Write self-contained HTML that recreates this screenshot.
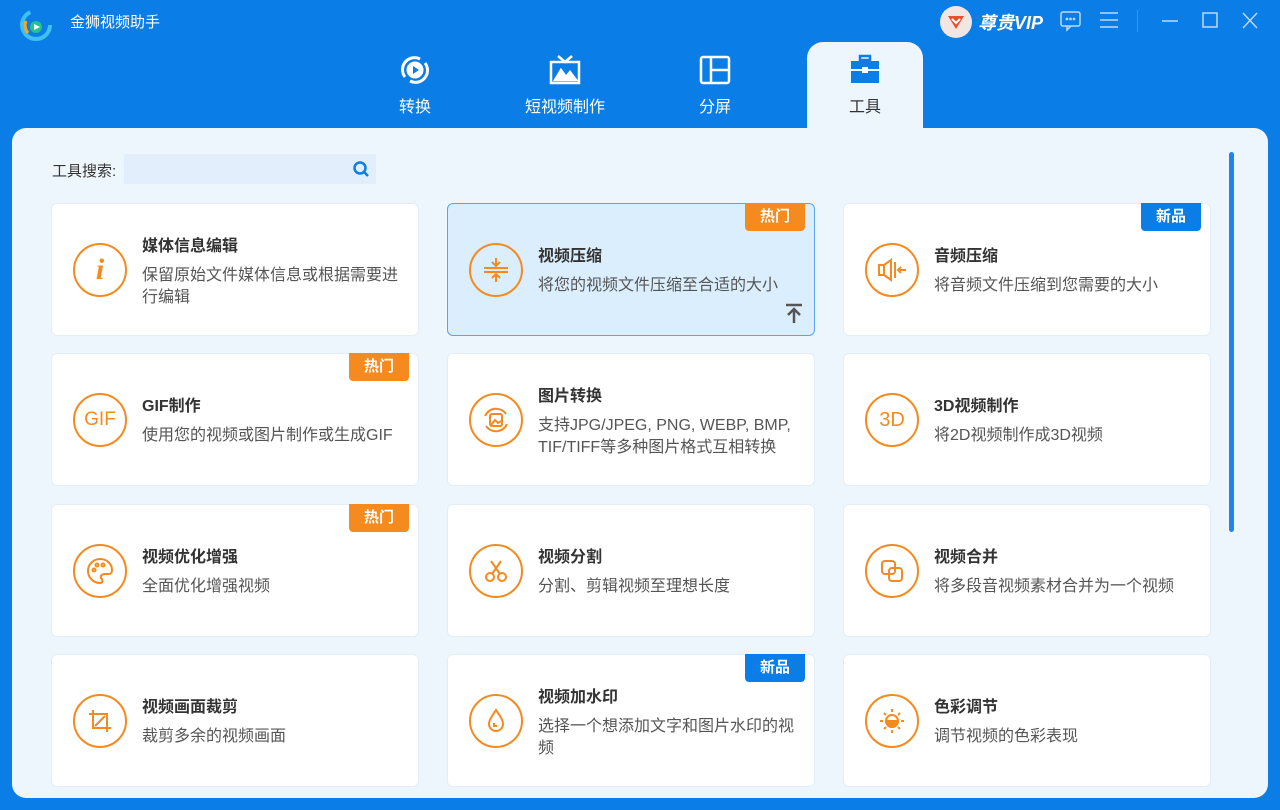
<!DOCTYPE html>
<html><head><meta charset="utf-8"><style>
*{box-sizing:border-box;margin:0;padding:0}
body{width:1280px;height:810px;background:#0b7de6;font-family:"Liberation Sans","Noto Sans CJK SC",sans-serif;position:relative;overflow:hidden}
.abs{position:absolute}
.title{left:70px;top:11px;color:#fff;font-size:15px}
.tab{position:absolute;top:53px;width:120px;text-align:center;color:#fff;font-size:16px}
.tab svg{display:block;margin:0 auto 6px}
.active{left:807px;top:42px;width:116px;height:90px;background:#eef6fd;border-radius:16px 16px 0 0}
.panel{left:12px;top:128px;width:1256px;height:670px;background:#eef6fd;border-radius:14px}
.card{position:absolute;width:368px;height:133px;background:#fff;border:1px solid #e3eef8;border-radius:6px}
.card.sel{background:#dbeefd;border-color:#5aa4ea}
.ic{position:absolute;left:21px;top:39px;width:54px;height:54px;border:2px solid #f58a1f;border-radius:50%;display:flex;align-items:center;justify-content:center;color:#f58a1f}
.ct{position:absolute;left:90px;font-size:16px;font-weight:bold;color:#333}
.cd{position:absolute;left:90px;width:258px;font-size:16px;color:#555;line-height:22px}
.badge{position:absolute;right:9px;top:-1px;width:60px;height:28px;border-radius:0 0 4px 4px;color:#fff;font-size:15px;font-weight:bold;text-align:center;line-height:27px}
.hot{background:#f58a1f}.new{background:#0b7de6}
</style></head><body>
<svg class="abs" style="left:20px;top:9px" width="32" height="32" viewBox="0 0 32 32"><circle cx="16" cy="16" r="14" fill="none" stroke="#3fc0f0" stroke-width="4" stroke-dasharray="60 30"/><path d="M8 24 A12 12 0 0 1 6 12" stroke="#f5a623" stroke-width="3" fill="none"/><circle cx="16" cy="18" r="6" fill="#22c38e"/><path d="M14 15 L20 18 L14 21Z" fill="#fff"/></svg>
<div class="abs title">金狮视频助手</div>
<div class="abs" style="left:940px;top:6px;width:32px;height:32px;border-radius:50%;background:#f1e6e1"></div>
<svg class="abs" style="left:946px;top:13px" width="20" height="18" viewBox="0 0 20 18"><path d="M2 3 H18 L10 16Z" fill="#e8502e"/><path d="M6 6 L10 10 L14 6" stroke="#fff" stroke-width="2" fill="none"/></svg>
<div class="abs" style="left:978px;top:9px;color:#fff;font-size:18px;font-weight:bold;font-style:italic">尊贵VIP</div>
<svg class="abs" style="left:1059px;top:10px" width="24" height="22" viewBox="0 0 24 22" fill="none" stroke="#bcdaf7" stroke-width="1.5"><rect x="2" y="2" width="19" height="14" rx="2"/><path d="M8 16 L8 20 L12 16"/><circle cx="8" cy="9" r=".6"/><circle cx="11.5" cy="9" r=".6"/><circle cx="15" cy="9" r=".6"/></svg>
<svg class="abs" style="left:1098px;top:11px" width="22" height="18" stroke="#bcdaf7" stroke-width="1.5"><path d="M2 2H20M2 9H20M2 16H20"/></svg>
<div class="abs" style="left:1137px;top:10px;width:1px;height:22px;background:#3f97ea"></div>
<svg class="abs" style="left:1160px;top:10px" width="100" height="22" stroke="#bcdaf7" stroke-width="1.5" fill="none"><path d="M2 11H18"/><rect x="43" y="3" width="14" height="14"/><path d="M83 3L97 18M97 3L83 18"/></svg>
<div class="abs active"></div>
<div class="tab" style="left:355px"><svg width="34" height="34" viewBox="0 0 34 34" fill="none" stroke="#fff" stroke-width="3"><path d="M7 24 A12 12 0 0 1 22 6"/><path d="M27 10 A12 12 0 0 1 12 28"/><circle cx="17" cy="17" r="7" fill="#fff"/><path d="M15 13 L21 17 L15 21Z" fill="#0b7de6" stroke="none"/></svg>转换</div>
<div class="tab" style="left:505px;width:120px"><svg width="34" height="34" viewBox="0 0 34 34" fill="none" stroke="#fff" stroke-width="2.5"><path d="M10 3 L17 9 L24 3"/><rect x="3" y="9" width="28" height="21"/><path d="M7 27 L13 17 L18 24 L22 19 L28 27Z" fill="#fff"/></svg>短视频制作</div>
<div class="tab" style="left:655px"><svg width="34" height="34" viewBox="0 0 34 34" fill="none" stroke="#fff" stroke-width="2.5"><rect x="3" y="4" width="28" height="26" rx="2"/><path d="M13 4V30M13 17H31"/></svg>分屏</div>
<div class="tab" style="left:805px;color:#333"><svg width="34" height="34" viewBox="0 0 34 34"><rect x="12" y="3" width="10" height="4" fill="none" stroke="#0b7de6" stroke-width="2.5"/><rect x="3" y="8" width="28" height="8" fill="#0b7de6"/><rect x="3" y="18" width="28" height="12" fill="#0b7de6"/><rect x="14" y="14" width="6" height="6" fill="#fff"/></svg>工具</div>
<div class="abs panel"></div>
<div class="abs" style="left:1229px;top:152px;width:5px;height:380px;border-radius:3px;background:#1f86e8"></div>
<div class="abs" style="left:52px;top:160px;font-size:15px;color:#333">工具搜索:</div>
<div class="abs" style="left:124px;top:154px;width:252px;height:30px;background:#e2eefb"></div>
<svg class="abs" style="left:352px;top:160px" width="18" height="18" fill="none" stroke="#0b7de6" stroke-width="2.5"><circle cx="8" cy="8" r="5.5"/><path d="M12 12L16 16"/></svg>

<div class="card" style="left:51px;top:203px"><div class="ic"><span style="font:italic bold 30px 'Liberation Serif',serif">i</span></div><div class="ct" style="top:28px">媒体信息编辑</div><div class="cd" style="top:61px">保留原始文件媒体信息或根据需要进行编辑</div></div>
<div class="card sel" style="left:447px;top:203px"><div class="badge hot">热门</div><div class="ic"><svg width="30" height="30" stroke="#f58a1f" stroke-width="2" fill="none"><path d="M3 13H27M3 17H27M15 3V11M11 7L15 11L19 7M15 27V19M11 23L15 19L19 23"/></svg></div><div class="ct" style="top:38px">视频压缩</div><div class="cd" style="top:71px">将您的视频文件压缩至合适的大小</div><svg class="abs" style="right:10px;top:98px" width="20" height="22" stroke="#555" stroke-width="2.5" fill="none"><path d="M2 3H18M10 21V7M4 13L10 7L16 13"/></svg></div>
<div class="card" style="left:843px;top:203px"><div class="badge new">新品</div><div class="ic"><svg width="32" height="28" stroke="#f58a1f" stroke-width="2" fill="none"><path d="M3 9H8V19H3ZM8 9L15 4V24L8 19M19 6V22M30 14H22M25 11L22 14L25 17"/></svg></div><div class="ct" style="top:38px">音频压缩</div><div class="cd" style="top:71px">将音频文件压缩到您需要的大小</div></div>

<div class="card" style="left:51px;top:353px"><div class="badge hot">热门</div><div class="ic" style="font-size:19px">GIF</div><div class="ct" style="top:38px">GIF制作</div><div class="cd" style="top:71px">使用您的视频或图片制作或生成GIF</div></div>
<div class="card" style="left:447px;top:353px"><div class="ic"><svg width="32" height="32" stroke="#f58a1f" stroke-width="2" fill="none"><path d="M5 12A12 12 0 0 1 26 10M27 20A12 12 0 0 1 6 22"/><rect x="10" y="10" width="12" height="12" rx="2"/><path d="M11 21L15 16L18 19L21 17"/></svg></div><div class="ct" style="top:28px">图片转换</div><div class="cd" style="top:61px">支持JPG/JPEG, PNG, WEBP, BMP, TIF/TIFF等多种图片格式互相转换</div></div>
<div class="card" style="left:843px;top:353px"><div class="ic" style="font-size:20px">3D</div><div class="ct" style="top:38px">3D视频制作</div><div class="cd" style="top:71px">将2D视频制作成3D视频</div></div>

<div class="card" style="left:51px;top:504px"><div class="badge hot">热门</div><div class="ic"><svg width="30" height="30" stroke="#f58a1f" stroke-width="2" fill="none"><path d="M15 3A12 12 0 1 0 15 27C18 27 18 24 16 22C15 20 17 18 20 18H24C26 18 27 16 27 14C27 8 22 3 15 3Z"/><circle cx="9" cy="14" r="1.5"/><circle cx="12" cy="9" r="1.5"/><circle cx="18" cy="9" r="1.5"/></svg></div><div class="ct" style="top:38px">视频优化增强</div><div class="cd" style="top:71px">全面优化增强视频</div></div>
<div class="card" style="left:447px;top:504px"><div class="ic"><svg width="30" height="30" stroke="#f58a1f" stroke-width="2" fill="none"><circle cx="9" cy="21" r="4"/><circle cx="21" cy="21" r="4"/><path d="M11 18L20 5M19 18L10 5"/></svg></div><div class="ct" style="top:38px">视频分割</div><div class="cd" style="top:71px">分割、剪辑视频至理想长度</div></div>
<div class="card" style="left:843px;top:504px"><div class="ic"><svg width="30" height="30" stroke="#f58a1f" stroke-width="2" fill="none"><rect x="5" y="5" width="13" height="13" rx="3"/><rect x="12" y="12" width="13" height="13" rx="3"/></svg></div><div class="ct" style="top:38px">视频合并</div><div class="cd" style="top:71px">将多段音视频素材合并为一个视频</div></div>

<div class="card" style="left:51px;top:654px"><div class="ic"><svg width="30" height="30" stroke="#f58a1f" stroke-width="2" fill="none"><path d="M4 8H22V26M8 4V22H26M10 20L20 10"/></svg></div><div class="ct" style="top:38px">视频画面裁剪</div><div class="cd" style="top:71px">裁剪多余的视频画面</div></div>
<div class="card" style="left:447px;top:654px"><div class="badge new">新品</div><div class="ic"><svg width="30" height="30" stroke="#f58a1f" stroke-width="2" fill="none"><path d="M15 4C11 10 8 14 8 18A7 7 0 0 0 22 18C22 14 19 10 15 4Z"/><path d="M13 17V20H16"/></svg></div><div class="ct" style="top:28px">视频加水印</div><div class="cd" style="top:61px">选择一个想添加文字和图片水印的视频</div></div>
<div class="card" style="left:843px;top:654px"><div class="ic"><svg width="30" height="30" stroke="#f58a1f" stroke-width="2" fill="none"><circle cx="15" cy="15" r="6"/><path d="M9 15A6 6 0 0 0 21 15Z" fill="#f58a1f"/><path d="M15 3V6M15 24V27M3 15H6M24 15H27M7 7L9 9M21 21L23 23M7 23L9 21M21 9L23 7"/></svg></div><div class="ct" style="top:38px">色彩调节</div><div class="cd" style="top:71px">调节视频的色彩表现</div></div>
</body></html>
